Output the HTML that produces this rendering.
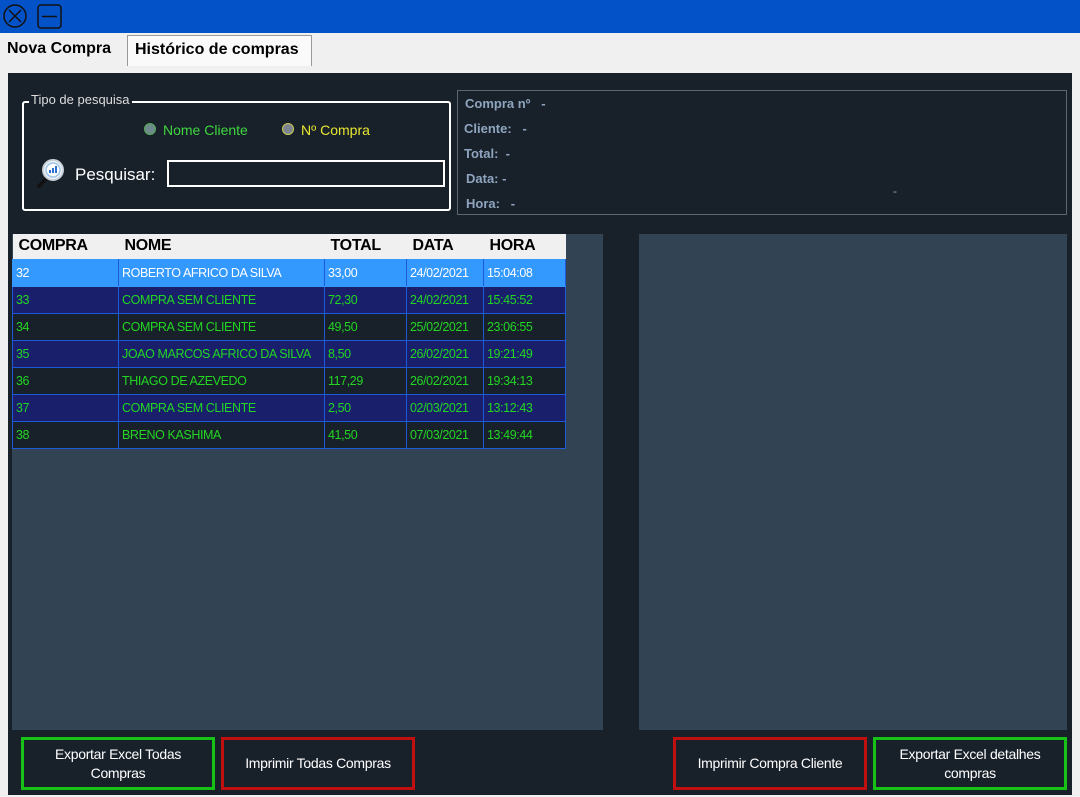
<!DOCTYPE html>
<html><head><style>
*{margin:0;padding:0;box-sizing:border-box}
body{width:1080px;height:797px;background:#f0f0f0;position:relative;overflow:hidden;font-family:"Liberation Sans",sans-serif}
.a{position:absolute}
.title{left:0;top:0;width:1080px;height:33px;background:#0452c8}
.panel{left:8px;top:73px;width:1064px;height:722px;background:#18202a}
.gray{background:#324354}
table{border-collapse:collapse;font-size:12.5px;table-layout:fixed;letter-spacing:-0.4px}
td{border:1px solid #1e5ad8;height:27px;padding-left:3px;color:#22d622;white-space:nowrap;overflow:hidden}
th{height:25px;text-align:left;padding-left:6px;font-size:16px;color:#000;background:#f0f0f0;font-weight:bold;letter-spacing:-0.3px}
tr.s td{background:#3399ff;color:#fff;border-color:#3399ff;border-right-color:#1e5ad8}
tr.n td{background:#1a1f6b}
tr.d td{background:#18202a}
.btn{top:737px;height:53px;border:3px solid;color:#fff;font-size:14px;display:flex;align-items:center;justify-content:center;text-align:center;line-height:19px;background:#18202a;letter-spacing:-0.3px}
.g{border-color:#17c217}.r{border-color:#c00f0f}
.lbl{color:#8fa5bf;font-weight:bold;font-size:13px}
</style></head><body>
<div class="a title"></div>
<svg class="a" style="left:3px;top:4px" width="60" height="26"><circle cx="12" cy="12" r="11" fill="none" stroke="#111" stroke-width="1.5"/><path d="M6 6L18 18M18 6L6 18" stroke="#111" stroke-width="1.5"/><rect x="35" y="1" width="23" height="23" rx="3" fill="none" stroke="#111" stroke-width="1.5"/><path d="M39 12.5H54" stroke="#111" stroke-width="1.5"/></svg>
<div class="a" style="left:7px;top:40px;font-size:16px;font-weight:bold;color:#000">Nova Compra</div>
<div class="a" style="left:127px;top:35px;width:185px;height:31px;border:1px solid #999;border-bottom:none;background:#fafafa"></div>
<div class="a" style="left:135px;top:41px;font-size:16px;font-weight:bold;color:#000">Histórico de compras</div>
<div class="a panel"></div>
<div class="a" style="left:22px;top:101px;width:429px;height:110px;border:2px solid #fff;border-radius:3px"></div>
<div class="a" style="left:29px;top:92px;background:#18202a;color:#ddd;font-size:13px;padding:0 2px">Tipo de pesquisa</div>
<div class="a" style="left:144px;top:123px;width:12px;height:12px;border-radius:50%;background:#6f8a8a;border:1px solid #5a5"></div>
<div class="a" style="left:163px;top:122px;color:#3ed83e;font-size:14px">Nome Cliente</div>
<div class="a" style="left:282px;top:123px;width:12px;height:12px;border-radius:50%;background:#7b8490;border:1px solid #cc5"></div>
<div class="a" style="left:301px;top:122px;color:#e8e830;font-size:14px">Nº Compra</div>
<svg class="a" style="left:36px;top:158px" width="30" height="30" viewBox="0 0 30 30"><path d="M12 19L3 28" stroke="#111" stroke-width="3.5" stroke-linecap="round"/><circle cx="17" cy="12" r="10" fill="#eef4fa" stroke="#c8d0d8" stroke-width="2"/><circle cx="17" cy="12" r="7" fill="#fff" stroke="#9ec4ea" stroke-width="1.5"/><path d="M14 15v-3M17 15v-5M20 15v-7" stroke="#2a6fd6" stroke-width="2"/></svg>
<div class="a" style="left:75px;top:165px;color:#fff;font-size:17px">Pesquisar:</div>
<div class="a" style="left:167px;top:160px;width:278px;height:27px;border:2px solid #fff;background:#18202a"></div>
<div class="a" style="left:457px;top:90px;width:610px;height:125px;border:1px solid #5d6670"></div>
<div class="a lbl" style="left:465px;top:96px">Compra nº &nbsp; -</div>
<div class="a lbl" style="left:464px;top:121px">Cliente: &nbsp; -</div>
<div class="a lbl" style="left:464px;top:146px">Total: &nbsp;-</div>
<div class="a lbl" style="left:466px;top:171px">Data: -</div>
<div class="a lbl" style="left:466px;top:196px">Hora: &nbsp; -</div>
<div class="a" style="left:893px;top:184px;color:#8fa5bf;font-size:12px">-</div>
<div class="a gray" style="left:12px;top:234px;width:591px;height:496px"></div>
<div class="a gray" style="left:639px;top:234px;width:428px;height:496px"></div>
<table class="a" style="left:12px;top:234px;width:553px">
<colgroup><col style="width:106px"><col style="width:206px"><col style="width:82px"><col style="width:77px"><col style="width:82px"></colgroup>
<tr><th>COMPRA</th><th>NOME</th><th>TOTAL</th><th>DATA</th><th>HORA</th></tr>
<tr class="s"><td>32</td><td>ROBERTO AFRICO DA SILVA</td><td>33,00</td><td>24/02/2021</td><td>15:04:08</td></tr>
<tr class="n"><td>33</td><td>COMPRA SEM CLIENTE</td><td>72,30</td><td>24/02/2021</td><td>15:45:52</td></tr>
<tr class="d"><td>34</td><td>COMPRA SEM CLIENTE</td><td>49,50</td><td>25/02/2021</td><td>23:06:55</td></tr>
<tr class="n"><td>35</td><td>JOAO MARCOS AFRICO DA SILVA</td><td>8,50</td><td>26/02/2021</td><td>19:21:49</td></tr>
<tr class="d"><td>36</td><td>THIAGO DE AZEVEDO</td><td>117,29</td><td>26/02/2021</td><td>19:34:13</td></tr>
<tr class="n"><td>37</td><td>COMPRA SEM CLIENTE</td><td>2,50</td><td>02/03/2021</td><td>13:12:43</td></tr>
<tr class="d"><td>38</td><td>BRENO KASHIMA</td><td>41,50</td><td>07/03/2021</td><td>13:49:44</td></tr>
</table>
<div class="a btn g" style="left:21px;width:194px">Exportar Excel Todas<br>Compras</div>
<div class="a btn r" style="left:221px;width:194px">Imprimir Todas Compras</div>
<div class="a btn r" style="left:673px;width:194px">Imprimir Compra Cliente</div>
<div class="a btn g" style="left:873px;width:194px">Exportar Excel detalhes<br>compras</div>
</body></html>
